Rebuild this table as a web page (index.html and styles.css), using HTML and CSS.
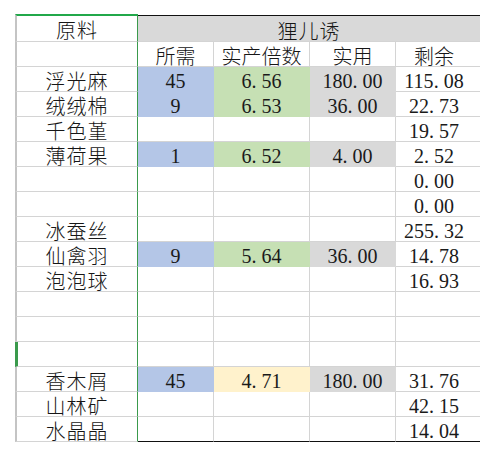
FILE: index.html
```html
<!DOCTYPE html>
<html lang="zh-CN">
<head>
<meta charset="utf-8">
<title>狸儿诱</title>
<link rel="stylesheet" href="styles.css">
</head>
<body>
<div class="sheet">
  <div class="c name top">原料</div>
  <div class="c head-merge">狸儿诱</div>

  <div class="c name"></div>
  <div class="c">所需</div>
  <div class="c">实产倍数</div>
  <div class="c">实用</div>
  <div class="c last">剩余</div>

  <div class="c name">浮光麻</div>
  <div class="c num blue">45</div>
  <div class="c num green">6<span class="dot">.</span>56</div>
  <div class="c num grey">180<span class="dot">.</span>00</div>
  <div class="c num last">115<span class="dot">.</span>08</div>

  <div class="c name">绒绒棉</div>
  <div class="c num blue">9</div>
  <div class="c num green">6<span class="dot">.</span>53</div>
  <div class="c num grey">36<span class="dot">.</span>00</div>
  <div class="c num last">22<span class="dot">.</span>73</div>

  <div class="c name">千色堇</div>
  <div class="c"></div>
  <div class="c"></div>
  <div class="c"></div>
  <div class="c num last">19<span class="dot">.</span>57</div>

  <div class="c name">薄荷果</div>
  <div class="c num blue">1</div>
  <div class="c num green">6<span class="dot">.</span>52</div>
  <div class="c num grey">4<span class="dot">.</span>00</div>
  <div class="c num last">2<span class="dot">.</span>52</div>

  <div class="c name"></div>
  <div class="c"></div>
  <div class="c"></div>
  <div class="c"></div>
  <div class="c num last">0<span class="dot">.</span>00</div>

  <div class="c name"></div>
  <div class="c"></div>
  <div class="c"></div>
  <div class="c"></div>
  <div class="c num last">0<span class="dot">.</span>00</div>

  <div class="c name">冰蚕丝</div>
  <div class="c"></div>
  <div class="c"></div>
  <div class="c"></div>
  <div class="c num last">255<span class="dot">.</span>32</div>

  <div class="c name">仙禽羽</div>
  <div class="c num blue">9</div>
  <div class="c num green">5<span class="dot">.</span>64</div>
  <div class="c num grey">36<span class="dot">.</span>00</div>
  <div class="c num last">14<span class="dot">.</span>78</div>

  <div class="c name">泡泡球</div>
  <div class="c"></div>
  <div class="c"></div>
  <div class="c"></div>
  <div class="c num last">16<span class="dot">.</span>93</div>

  <div class="c name"></div>
  <div class="c"></div>
  <div class="c"></div>
  <div class="c"></div>
  <div class="c last"></div>

  <div class="c name"></div>
  <div class="c"></div>
  <div class="c"></div>
  <div class="c"></div>
  <div class="c last"></div>

  <div class="c name marked"></div>
  <div class="c"></div>
  <div class="c"></div>
  <div class="c"></div>
  <div class="c last"></div>

  <div class="c name">香木屑</div>
  <div class="c num blue">45</div>
  <div class="c num yellow">4<span class="dot">.</span>71</div>
  <div class="c num grey">180<span class="dot">.</span>00</div>
  <div class="c num last">31<span class="dot">.</span>76</div>

  <div class="c name">山林矿</div>
  <div class="c"></div>
  <div class="c"></div>
  <div class="c"></div>
  <div class="c num last">42<span class="dot">.</span>15</div>

  <div class="c name bottom">水晶晶</div>
  <div class="c bottom"></div>
  <div class="c bottom"></div>
  <div class="c bottom"></div>
  <div class="c num last bottom">14<span class="dot">.</span>04</div>
</div>
</body>
</html>
```

FILE: styles.css
```css
html, body {
  margin: 0;
  padding: 0;
  background: #ffffff;
}

body {
  font-family: "Noto Sans CJK SC", "Liberation Serif", sans-serif;
  color: #161616;
}

.sheet {
  display: grid;
  grid-template-columns: 123px 76px 96px 86px 84px;
  align-items: start;
  margin: 14px 0 0 15px;
  width: 465px;
}

.c {
  box-sizing: border-box;
  height: 25px;
  padding-top: 4px;
  line-height: 20px;
  font-size: 20px;
  font-weight: 300;
  text-align: center;
  white-space: nowrap;
  border-right: 1px solid #d4d4d4;
  border-bottom: 1px solid #d4d4d4;
}

.c.last {
  border-right: none;
  padding-right: 8px;
}

.name {
  border-left: 2px solid #c4c4c4;
  border-right: 1px solid #3a9a4c;
  letter-spacing: 1px;
}

.name.top {
  height: 28px;
  padding-top: 4px;
  border-top: 2px solid #21a84a;
}

.name.marked {
  border-left: 3px solid #3a9a4c;
}

.head-merge {
  grid-column: span 4;
  margin-top: 1px;
  height: 27px;
  padding-top: 5px;
  background: #d9d9d9;
  border-top: 1px solid #111111;
  border-right: none;
  letter-spacing: 1px;
}

.num {
  font-family: "Liberation Serif", "Noto Sans CJK SC", serif;
  font-weight: 400;
  color: #1a1a1a;
}

.dot {
  display: inline-block;
  width: 10px;
  text-align: left;
}

.blue {
  background: #b4c6e7;
  border-color: #b4c6e7;
}

.green {
  background: #c6e0b4;
  border-color: #c6e0b4;
}

.grey {
  background: #d9d9d9;
  border-color: #d9d9d9;
}

.yellow {
  background: #fff2cc;
  border-color: #fff2cc;
}

.bottom {
  border-bottom: 1px solid #111111;
}

.name.bottom {
  border-bottom: 1px solid #d4d4d4;
}
```
